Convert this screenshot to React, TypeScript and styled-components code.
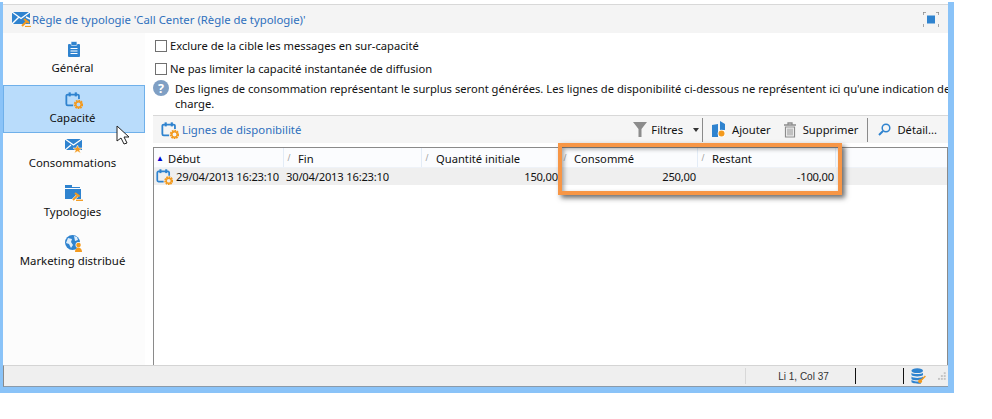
import React from "react";
import styled, { createGlobalStyle } from "styled-components";

const Global = createGlobalStyle`
  html, body { margin: 0; padding: 0; background: #fff; }
  body { width: 992px; height: 419px; overflow: hidden; font-family: "Noto Sans", "Open Sans", sans-serif; font-size: 11.2px; color: #111; }
`;
const Page = styled.div`width: 992px; height: 419px; padding-top: 2px; box-sizing: border-box; background: #fff;`;
const Win = styled.div`
  position: relative; width: 954px; height: 391px; box-sizing: border-box;
  border-left: 3px solid #8ac3f8; border-right: 6px solid #8ac3f8; border-bottom: 6px solid #8ac3f8;
  display: flex; flex-direction: column; background: #fff;
`;
const TitleBar = styled.div`
  height: 28px; margin-top: 2px; border-top: 1px solid #d8d8d8; background: #f4f4f4; flex: none;
  display: flex; align-items: center; padding: 0 9px 0 9px; gap: 1px; color: #2f70bd; font-size: 11.35px;
`;
const TitleText = styled.span`flex: 1; white-space: nowrap;`;
const Body = styled.div`flex: 1; display: flex; min-height: 0;`;
const Side = styled.div`width: 142px; flex: none; background: #fcfcfc; display: flex; flex-direction: column; align-items: stretch; padding-top: 7px; box-sizing: border-box;`;
const Tile = styled.div<{ $active?: boolean; $h: number; $pt: number; $gap?: number }>`
  height: ${p => p.$h}px; box-sizing: border-box; display: flex; flex-direction: column; align-items: center; justify-content: flex-start;
  padding-top: ${p => p.$pt}px; gap: ${p => p.$gap ?? 1}px;
  background: ${p => (p.$active ? "#b9dcfb" : "transparent")};
  border: ${p => (p.$active ? "1px solid #6fb0ea" : "0 solid transparent")};
  color: #111; line-height: 16px; white-space: nowrap; font-size: 11.4px;
`;
const TileLabel = styled.span`margin-right: 3px;`;
const Main = styled.div`flex: 1; min-width: 0; display: flex; flex-direction: column; padding-left: 8px; background: #fff;`;
const CheckRow = styled.label`height: 23px; display: flex; align-items: center; gap: 3px; white-space: nowrap; flex: none; padding-top: 2px; box-sizing: border-box;`;
const CheckBox = styled.span`width: 10px; height: 10px; border: 1px solid #707070; background: #fff; flex: none; margin-left: 2px;`;
const Info = styled.div`display: flex; gap: 6px; flex: none; height: 36px; overflow: hidden;`;
const InfoDot = styled.span`
  width: 16px; height: 16px; border-radius: 50%; background: #7f9fc4; color: #fff; flex: none; margin-top: 1px;
  display: flex; align-items: center; justify-content: center; font-weight: 700; font-size: 12.5px;
`;
const InfoText = styled.div`white-space: pre; line-height: 15px; padding-top: 2px;`;
const Toolbar = styled.div`
  height: 28px; flex: none; background: #f5f5f5; border-top: 1px solid #d8d8d8; box-sizing: border-box; display: flex; align-items: center; padding-left: 8px;
`;
const ToolTitle = styled.span`color: #2f70bd; margin-left: 3px; flex: 1; white-space: nowrap; font-size: 11.35px;`;
const ToolBtn = styled.span<{ $gap?: number; $ml?: number; $mr?: number }>`
  display: flex; align-items: center; gap: ${p => p.$gap ?? 4}px; white-space: nowrap;
  margin-left: ${p => p.$ml ?? 0}px; margin-right: ${p => p.$mr ?? 0}px;
`;
const Sep = styled.span<{ $m: string }>`width: 1px; height: 24px; background: #8a8a8a; margin: ${p => p.$m}; flex: none;`;
const Arrow = styled.span`width: 0; height: 0; border: 3.5px solid transparent; border-top: 4px solid #333; border-bottom: 0; margin-left: 6px;`;
const Grid = styled.div`flex: 1; margin-top: 4px; border-left: 1px solid #8a8a8a; border-top: 1px solid #8a8a8a; border-right: 1px solid #8a8a8a; min-height: 0; background: #fff;`;
const cols = "130px 138px 138px 138px 138px 1fr";
const HeadRow = styled.div`display: grid; grid-template-columns: ${cols}; height: 20px; background: #fbfcfe; border-bottom: 1px solid #eef2f8; box-sizing: border-box;`;
const HeadCell = styled.div`
  display: flex; align-items: center; border-right: 1px solid #e3ecf7; padding: 1px 0 0 2px; gap: 6px; white-space: nowrap; box-sizing: border-box;
`;
const SortMark = styled.span<{ $up?: boolean }>`
  width: 6px; text-align: center; font-size: 8px; line-height: 10px; color: ${p => (p.$up ? "#0000d0" : "#999")}; flex: none;
`;
const DataRow = styled.div`display: grid; grid-template-columns: ${cols}; height: 17px; background: #efefef; line-height: 17px; letter-spacing: -0.2px;`;
const Cell = styled.div<{ $right?: boolean }>`
  white-space: nowrap; padding: 0 2px; display: flex; gap: 3px; align-items: center; box-sizing: border-box; min-width: 0;
  justify-content: ${p => (p.$right ? "flex-end" : "flex-start")};
`;
const Status = styled.div`
  height: 22px; flex: none; background: #efefef; border-top: 1px solid #d4d4d4; border-bottom: 1px solid #8a9aaa; border-left: 1px solid #8a8a8a; box-sizing: border-box; display: flex; align-items: center; justify-content: flex-end;
  font-family: "Liberation Sans", sans-serif; font-size: 10px; color: #333; padding-right: 1px;
`;
const StatCell = styled.span<{ $w: number; $c: string; $pl?: number }>`
  width: ${p => p.$w}px; height: 16px; border-left: 1px solid ${p => p.$c}; display: flex; align-items: center; flex: none; box-sizing: border-box;
  justify-content: center; padding-left: ${p => p.$pl ?? 0}px;
`;
const DbCell = styled(StatCell)`justify-content: flex-start; gap: 12px;`;
const Highlight = styled.div`
  position: absolute; left: 558px; top: 143px; width: 284px; height: 52px; box-sizing: border-box; border: 4px solid #f79646;
  box-shadow: 3px 3px 5px rgba(60,60,60,.75), inset 2px 2px 4px rgba(60,60,60,.45);
`;
const Pointer = styled.svg`position: absolute; left: 115px; top: 125px;`;

const Cal = ({ s = 20 }: { s?: number }) => (
  <svg width={s} height={s} viewBox="0 0 20 20">
    <path d="M9 16H3a1.5 1.5 0 0 1-1.5-1.5V5.500A1.500 1.500 0 0 1 3 4h11a1.500 1.500 0 0 1 1.500 1.500V9" fill="none" stroke="#2f83cf" strokeWidth="2" />
    <rect x="4" y="1.500" width="2.400" height="4.500" fill="#2f83cf" /><rect x="10.800" y="1.500" width="2.400" height="4.500" fill="#2f83cf" />
    <circle cx="15" cy="15" r="4" fill="none" stroke="#f39a1e" strokeWidth="2.600" strokeDasharray="1.800 .8" />
    <circle cx="15" cy="15" r="3" fill="none" stroke="#f39a1e" strokeWidth="1.600" />
  </svg>
);
const Mail = () => (
  <svg width="19" height="16" viewBox="0 0 19 16">
    <rect width="18" height="12" y="1" fill="#2f83cf" /><path d="M0 1l9 6.500L18 1M0 13l6.500-6.500M18 8l-4-2" stroke="#fff" strokeWidth="1.400" fill="none" />
    <path d="M10 15l5-5" stroke="#f39a1e" strokeWidth="2" /><path d="M12 8l5 4" stroke="#f39a1e" strokeWidth="2.200" />
    <path d="M13 15.500h6" stroke="#f39a1e" strokeWidth="1.200" />
  </svg>
);
const MailStar = () => (
  <svg width="18" height="15" viewBox="0 0 18 15">
    <rect width="17" height="11" fill="#2f83cf" /><path d="M0 0l8.500 6L17 0M0 11l6-5" stroke="#fff" strokeWidth="1.300" fill="none" />
    <path d="M12.500 6l1.400 3h3.100l-2.500 2 1 3.200-3-1.900-3 1.900 1-3.200-2.500-2h3.100z" fill="#f39a1e" stroke="#fff" strokeWidth=".5" />
  </svg>
);
const Clip = () => (
  <svg width="14" height="16" viewBox="0 0 14 16">
    <rect x="1" y="3" width="12" height="13" rx="1" fill="#2f83cf" /><rect x="4" y="0.500" width="6" height="4" rx="1" fill="#2f83cf" stroke="#fff" strokeWidth=".6" />
    <path d="M3.500 7.500h7M3.500 10h7M3.500 12.500h7" stroke="#fff" strokeWidth="1" />
  </svg>
);
const Folder = () => (
  <svg width="18" height="16" viewBox="0 0 18 16">
    <path d="M0 0h7v2h8v1H0zM0 4h16v10H0z" fill="#2f83cf" />
    <path d="M8 15l4-4" stroke="#fff" strokeWidth="3" />
    <path d="M8 15l4-4" stroke="#f39a1e" strokeWidth="2" /><path d="M10 8l4.500 3.500" stroke="#f39a1e" strokeWidth="2.200" />
    <path d="M11 15.300h7" stroke="#f39a1e" strokeWidth="1.300" />
  </svg>
);
const Globe = () => (
  <svg width="18" height="17" viewBox="0 0 18 17">
    <circle cx="7.500" cy="7.500" r="7.500" fill="#2f83cf" />
    <path d="M3 3l4 1-1 3 2 3-2 3-2-4-3-1zM9 1l3 1 1 3-3 1z" fill="#dfeefb" />
    <circle cx="13.500" cy="10" r="3" fill="#fff" />
    <circle cx="13.500" cy="10" r="2.300" fill="#f39a1e" /><path d="M10 17c0-6 7-6 7 0z" fill="#f39a1e" />
  </svg>
);
const Funnel = () => <svg width="14" height="15" viewBox="0 0 14 15"><path d="M0 0h14L8.500 7v8h-3V7z" fill="#8c8c8c" /></svg>;
const Add = () => (
  <svg width="14" height="17" viewBox="0 0 14 17">
    <path d="M0 4l6-1v13H0zM8 0l5 3v6H8z" fill="#2f83cf" />
    <circle cx="9.500" cy="12.500" r="3.800" fill="#fff" />
    <circle cx="9.500" cy="12.500" r="3" fill="#f39a1e" />
  </svg>
);
const Trash = () => (
  <svg width="14" height="16" viewBox="0 0 14 16">
    <path d="M1 3h12M5 3V1h4v2" stroke="#8c8c8c" strokeWidth="1.300" fill="none" />
    <path d="M2.500 5h9v10h-9z" fill="none" stroke="#8c8c8c" strokeWidth="1.200" />
    <path d="M5 6.500v7M7 6.500v7M9 6.500v7" stroke="#8c8c8c" />
  </svg>
);
const Lens = () => (
  <svg width="13" height="13" viewBox="0 0 13 13">
    <circle cx="8" cy="5" r="3.800" fill="none" stroke="#2f83cf" strokeWidth="1.500" /><path d="M5 8l-4 4" stroke="#2f83cf" strokeWidth="2" />
  </svg>
);
const Focus = () => (
  <svg width="16" height="15" viewBox="0 0 16 15">
    <rect x="4" y="3.500" width="8" height="8" fill="#2f83cf" />
    <path d="M0 3V0h3M13 0h3v3M0 12v3M16 12v3" stroke="#8c8c8c" strokeWidth="1.500" fill="none" />
  </svg>
);
const Db = () => (
  <svg width="16" height="16" viewBox="0 0 16 16">
    <ellipse cx="6.500" cy="2.500" rx="6" ry="2.500" fill="#2f83cf" />
    <path d="M.5 4.500c2 2 10 2 12 0V7c-2 2-10 2-12 0zM.5 8.500c2 2 10 2 12 0V11c-2 2-10 2-12 0zM.5 12c2 2 8 2 9 2l1 2c-3 0-10 0-10-2z" fill="#2f83cf" />
    <circle cx="9.500" cy="13.500" r="2" fill="#f39a1e" /><path d="M10 13l5-5" stroke="#f39a1e" strokeWidth="1.600" />
  </svg>
);
const Grip = () => (
  <svg width="9" height="9" viewBox="0 0 9 9" fill="#c4c4c4">
    <rect x="6" y="0" width="2" height="2" /><rect x="3" y="3" width="2" height="2" /><rect x="6" y="3" width="2" height="2" />
    <rect x="0" y="6" width="2" height="2" /><rect x="3" y="6" width="2" height="2" /><rect x="6" y="6" width="2" height="2" />
  </svg>
);

export default function App() {
  const heads = ["Fin", "Quantité initiale", "Consommé", "Restant"];
  return (
    <Page>
      <Global />
      <Win>
        <TitleBar>
          <Mail />
          <TitleText>Règle de typologie 'Call Center (Règle de typologie)'</TitleText>
          <Focus />
        </TitleBar>
        <Body>
          <Side>
            <Tile $h={45} $pt={1} $gap={3}><Clip /><TileLabel>Général</TileLabel></Tile>
            <Tile $h={48} $pt={5} $active><Cal s={18} /><TileLabel>Capacité</TileLabel></Tile>
            <Tile $h={49} $pt={6}><MailStar /><TileLabel>Consommations</TileLabel></Tile>
            <Tile $h={49} $pt={3} $gap={3}><Folder /><TileLabel>Typologies</TileLabel></Tile>
            <Tile $h={49} $pt={4}><Globe /><TileLabel>Marketing distribué</TileLabel></Tile>
          </Side>
          <Main>
            <CheckRow><CheckBox />Exclure de la cible les messages en sur-capacité</CheckRow>
            <CheckRow><CheckBox />Ne pas limiter la capacité instantanée de diffusion</CheckRow>
            <Info>
              <InfoDot>?</InfoDot>
              <InfoText>{"Des lignes de consommation représentant le surplus seront générées. Les lignes de disponibilité ci-dessous ne représentent ici qu'une indication de\ncharge."}</InfoText>
            </Info>
            <Toolbar>
              <Cal s={18} />
              <ToolTitle>Lignes de disponibilité</ToolTitle>
              <ToolBtn><Funnel />Filtres<Arrow /></ToolBtn>
              <Sep $m="0 9px 0 3px" />
              <ToolBtn $gap={6}><Add />Ajouter</ToolBtn>
              <ToolBtn $gap={6} $ml={12}><Trash />Supprimer</ToolBtn>
              <Sep $m="0 10px 0 9px" />
              <ToolBtn $gap={6} $mr={11}><Lens />Détail...</ToolBtn>
            </Toolbar>
            <Grid>
              <HeadRow>
                <HeadCell><SortMark $up>▲</SortMark>Début</HeadCell>
                {heads.map(h => <HeadCell key={h}><SortMark>/</SortMark>{h}</HeadCell>)}
                <div />
              </HeadRow>
              <DataRow>
                <Cell><Cal s={17} />29/04/2013 16:23:10</Cell>
                <Cell>30/04/2013 16:23:10</Cell>
                <Cell $right>150,00</Cell>
                <Cell $right>250,00</Cell>
                <Cell $right>-100,00</Cell>
                <div />
              </DataRow>
            </Grid>
          </Main>
        </Body>
        <Status>
          <StatCell $w={110} $c="#d8d8d8" $pl={6}>Li 1, Col 37</StatCell>
          <StatCell $w={48} $c="#111" />
          <DbCell $w={44} $c="#111" $pl={7}><Db /><Grip /></DbCell>
        </Status>
      </Win>
      <Highlight />
      <Pointer width="20" height="22" viewBox="0 0 20 22">
        <path d="M2 1v15l4-3 3 6 3-1-3-6h5z" fill="#fff" stroke="#222" strokeWidth="1" />
      </Pointer>
    </Page>
  );
}
